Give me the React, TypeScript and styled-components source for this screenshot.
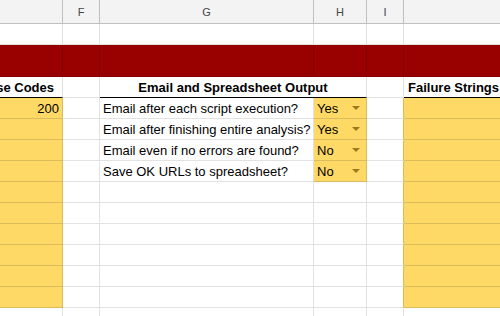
import styled, {createGlobalStyle} from "styled-components";

const GRID_LINE = "#e2e2e2";
const HEADER_LINE = "#c0c0c0";
const HEADER_BG = "#f3f3f3";
const RED = "#990000";
const RED_LINE = "#860000";
const YELLOW = "#ffd966";
const YELLOW_LINE = "#dcbb5c";
const ARROW_COLOR = "#9a7a1e";
const ROW_HEIGHT = 21;

const GlobalStyle = createGlobalStyle`
    html, body {
        margin: 0;
        padding: 0;
        background: #fff;
        overflow: hidden;
    }
    body {
        font-family: "Liberation Sans", Arial, sans-serif;
    }
`;

const Sheet = styled.div`
    display: grid;
    grid-template-columns: 63px 37px 214px 53px 37px 1fr;
    grid-template-rows: 24px 21px 32px;
    grid-auto-rows: ${ROW_HEIGHT}px;
    width: 500px;
    height: 316px;
    overflow: hidden;
    font-size: 13px;
    color: #000;
`;

const ColumnHeader = styled.div<{$last?: boolean}>`
    display: flex;
    align-items: center;
    justify-content: center;
    background: ${HEADER_BG};
    border-right: ${props => (props.$last ? "none" : `1px solid ${HEADER_LINE}`)};
    border-bottom: 1px solid ${HEADER_LINE};
    font-size: 11px;
    color: #444;
    box-sizing: border-box;
`;

const Cell = styled.div<{$bg?: string; $line?: string; $right?: string; $under?: string; $span?: number; $justify?: string; $bold?: boolean; $last?: boolean}>`
    grid-column: span ${props => props.$span ?? 1};
    display: flex;
    align-items: center;
    justify-content: ${props => props.$justify ?? "flex-start"};
    gap: 4px;
    padding: 0 3px;
    min-width: 0;
    background: ${props => props.$bg ?? "#fff"};
    border-right: ${props => (props.$last ? "none" : `1px solid ${props.$right ?? props.$line ?? GRID_LINE}`)};
    border-bottom: 1px solid ${props => props.$under ?? props.$line ?? GRID_LINE};
    font-weight: ${props => (props.$bold ? 700 : 400)};
    white-space: nowrap;
    overflow: hidden;
    box-sizing: border-box;
`;

// the merged "Response Codes" cell starts left of the visible area, so only its tail shows
const Clipped = styled.span`
    flex: none;
`;

const Dropdown = styled(Cell)`
    justify-content: space-between;
    padding-right: 6px;
`;

const Arrow = styled.span`
    width: 0;
    height: 0;
    border-left: 4px solid transparent;
    border-right: 4px solid transparent;
    border-top: 4px solid ${ARROW_COLOR};
`;

const COLUMNS = ["", "F", "G", "H", "I", ""];

const OPTIONS = [
    {label: "Email after each script execution?", value: "Yes"},
    {label: "Email after finishing entire analysis?", value: "Yes"},
    {label: "Email even if no errors are found?", value: "No"},
    {label: "Save OK URLs to spreadsheet?", value: "No"},
];

const YELLOW_ROWS = 10;

export default function App() {
    const rows = Array.from({length: YELLOW_ROWS}, (_, i) => i);

    return (
        <>
            <GlobalStyle />
            <Sheet>
                {COLUMNS.map((name, i) => (
                    <ColumnHeader key={`h-${i}`} $last={i === COLUMNS.length - 1}>
                        {name}
                    </ColumnHeader>
                ))}

                {COLUMNS.map((_, i) => (
                    <Cell key={`blank-${i}`} $last={i === COLUMNS.length - 1} />
                ))}

                {COLUMNS.map((_, i) => (
                    <Cell key={`red-${i}`} $bg={RED} $line={RED_LINE} $last={i === COLUMNS.length - 1} />
                ))}

                <Cell $bold $justify="flex-end" $under="#000" style={{paddingRight: 8}}>
                    <Clipped>Response Codes</Clipped>
                </Cell>
                <Cell />
                <Cell $bold $span={2} $justify="center" $under="#000">
                    Email and Spreadsheet Output
                </Cell>
                <Cell />
                <Cell $bold $under="#000" $last style={{paddingLeft: 4}}>
                    Failure Strings
                </Cell>

                {rows.map(i => {
                    const option = OPTIONS[i];
                    return [
                        <Cell key={`e-${i}`} $bg={YELLOW} $line={YELLOW_LINE} $justify="flex-end">
                            {i === 0 ? "200" : ""}
                        </Cell>,
                        <Cell key={`f-${i}`} />,
                        <Cell key={`g-${i}`}>{option?.label}</Cell>,
                        option ? (
                            <Dropdown key={`h-${i}`} $bg={YELLOW} $line={YELLOW_LINE}>
                                {option.value}
                                <Arrow />
                            </Dropdown>
                        ) : (
                            <Cell key={`h-${i}`} />
                        ),
                        <Cell key={`i-${i}`} $right={YELLOW_LINE} />,
                        <Cell key={`j-${i}`} $bg={YELLOW} $line={YELLOW_LINE} $last />,
                    ];
                })}

                {COLUMNS.map((_, i) => (
                    <Cell key={`tail-${i}`} $last={i === COLUMNS.length - 1} />
                ))}
            </Sheet>
        </>
    );
}
